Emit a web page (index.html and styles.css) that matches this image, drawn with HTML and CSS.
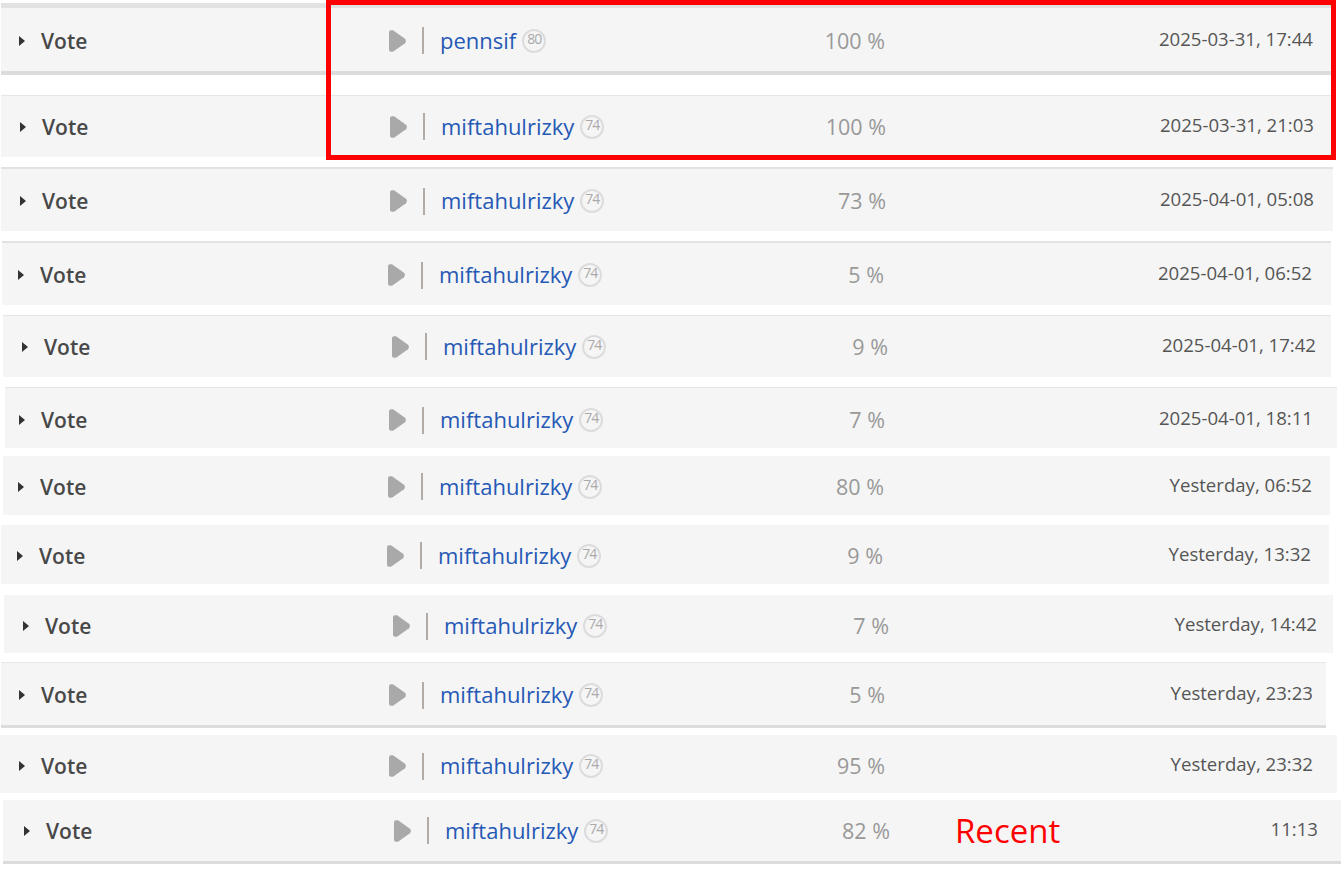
FILE: index.html
```html
<!DOCTYPE html>
<html lang="en">
<head>
<meta charset="utf-8">
<title>Vote list</title>
<link rel="stylesheet" href="styles.css">
</head>
<body>
<svg class="defs" width="0" height="0" aria-hidden="true"><defs><path id="play" d="M2 0.3H4L16 8.8Q17.8 11 16 13.2L4 21.7H2Q0 21.7 0 19.7V2.3Q0 0.3 2 0.3Z"/></defs></svg>
<div class="list">
  <div class="row r1"><span class="caret"></span><span class="vote">Vote</span><div class="who"><svg class="play" viewBox="0 0 17 22"><use href="#play"/></svg><span class="sep"></span><a class="user">pennsif</a><span class="rep">80</span></div><span class="pct">100 %</span><span class="time">2025-03-31, 17:44</span></div>
  <div class="row r2"><span class="caret"></span><span class="vote">Vote</span><div class="who"><svg class="play" viewBox="0 0 17 22"><use href="#play"/></svg><span class="sep"></span><a class="user">miftahulrizky</a><span class="rep">74</span></div><span class="pct">100 %</span><span class="time">2025-03-31, 21:03</span></div>
  <div class="row r3"><span class="caret"></span><span class="vote">Vote</span><div class="who"><svg class="play" viewBox="0 0 17 22"><use href="#play"/></svg><span class="sep"></span><a class="user">miftahulrizky</a><span class="rep">74</span></div><span class="pct">73 %</span><span class="time">2025-04-01, 05:08</span></div>
  <div class="row r4"><span class="caret"></span><span class="vote">Vote</span><div class="who"><svg class="play" viewBox="0 0 17 22"><use href="#play"/></svg><span class="sep"></span><a class="user">miftahulrizky</a><span class="rep">74</span></div><span class="pct">5 %</span><span class="time">2025-04-01, 06:52</span></div>
  <div class="row r5"><span class="caret"></span><span class="vote">Vote</span><div class="who"><svg class="play" viewBox="0 0 17 22"><use href="#play"/></svg><span class="sep"></span><a class="user">miftahulrizky</a><span class="rep">74</span></div><span class="pct">9 %</span><span class="time">2025-04-01, 17:42</span></div>
  <div class="row r6"><span class="caret"></span><span class="vote">Vote</span><div class="who"><svg class="play" viewBox="0 0 17 22"><use href="#play"/></svg><span class="sep"></span><a class="user">miftahulrizky</a><span class="rep">74</span></div><span class="pct">7 %</span><span class="time">2025-04-01, 18:11</span></div>
  <div class="row r7"><span class="caret"></span><span class="vote">Vote</span><div class="who"><svg class="play" viewBox="0 0 17 22"><use href="#play"/></svg><span class="sep"></span><a class="user">miftahulrizky</a><span class="rep">74</span></div><span class="pct">80 %</span><span class="time">Yesterday, 06:52</span></div>
  <div class="row r8"><span class="caret"></span><span class="vote">Vote</span><div class="who"><svg class="play" viewBox="0 0 17 22"><use href="#play"/></svg><span class="sep"></span><a class="user">miftahulrizky</a><span class="rep">74</span></div><span class="pct">9 %</span><span class="time">Yesterday, 13:32</span></div>
  <div class="row r9"><span class="caret"></span><span class="vote">Vote</span><div class="who"><svg class="play" viewBox="0 0 17 22"><use href="#play"/></svg><span class="sep"></span><a class="user">miftahulrizky</a><span class="rep">74</span></div><span class="pct">7 %</span><span class="time">Yesterday, 14:42</span></div>
  <div class="row r10"><span class="caret"></span><span class="vote">Vote</span><div class="who"><svg class="play" viewBox="0 0 17 22"><use href="#play"/></svg><span class="sep"></span><a class="user">miftahulrizky</a><span class="rep">74</span></div><span class="pct">5 %</span><span class="time">Yesterday, 23:23</span></div>
  <div class="row r11"><span class="caret"></span><span class="vote">Vote</span><div class="who"><svg class="play" viewBox="0 0 17 22"><use href="#play"/></svg><span class="sep"></span><a class="user">miftahulrizky</a><span class="rep">74</span></div><span class="pct">95 %</span><span class="time">Yesterday, 23:32</span></div>
  <div class="row r12"><span class="caret"></span><span class="vote">Vote</span><div class="who"><svg class="play" viewBox="0 0 17 22"><use href="#play"/></svg><span class="sep"></span><a class="user">miftahulrizky</a><span class="rep">74</span></div><span class="pct">82 %</span><span class="time">11:13</span></div>
</div>
<div class="highlight"></div>
<div class="recent">Recent</div>
</body>
</html>
```
FILE: styles.css
```css
html, body { margin: 0; padding: 0; background: #fff; }
body { width: 1343px; height: 876px; overflow: hidden; position: relative; font-family: "Open Sans", "Noto Sans", sans-serif; }
.defs { position: absolute; }
.list { display: flex; flex-direction: column; padding-top: 3px; }
.row { display: flex; align-items: center; background: #f5f5f5; box-sizing: border-box; padding-left: 18px; }
.caret { flex: none; width: 0; height: 0; border-left: 6px solid #333; border-top: 5px solid transparent; border-bottom: 5px solid transparent; }
.vote { flex: none; margin-left: 16px; width: 348px; font-size: 21px; font-weight: 600; color: #484848; }
.who { flex: none; width: 300px; display: flex; align-items: center; }
.play { flex: none; width: 17px; height: 22px; fill: #a9a9a9; }
.sep { flex: none; margin-left: 16px; width: 2px; height: 27px; background: #b3aba6; }
.user { margin-left: 16px; margin-bottom: 2px; font-size: 22px; color: #2659b5; }
.rep { flex: none; margin-left: 6px; width: 24px; height: 24px; box-sizing: border-box; border: 2px solid #dcdcdc; border-radius: 50%; font-size: 14px; line-height: 16px; letter-spacing: -1px; text-align: center; color: #aaa; }
.pct { flex: none; width: 196px; margin-bottom: 1px; text-align: right; font-size: 21.5px; color: #999; }
.time { flex: none; width: 428px; text-align: right; font-size: 18.6px; color: #555; margin-bottom: 5px; }
.highlight { position: absolute; left: 326px; top: 0; width: 1010px; height: 160px; box-sizing: border-box; border: 5px solid #f00; }
.recent { position: absolute; left: 955px; top: 809px; font-family: "Open Sans", sans-serif; font-size: 33px; line-height: 44px; color: #f00; }
.r1 { height: 72px; margin-left: 1px; width: 1333px; border-top: 5px solid #e2e2e2; border-bottom: 4px solid #dcdcdc; padding-top: 2px; }
.r2 { height: 62px; margin-top: 20px; margin-left: 1px; width: 1333px; border-top: 1px solid #e6e6e6; padding-left: 19px; }
.r3 { height: 64px; margin-top: 10px; margin-left: 1px; width: 1332px; border-top: 2px solid #e2e2e2; padding-left: 19px; padding-top: 2px; }
.r4 { height: 64px; margin-top: 10px; margin-left: 2px; width: 1329px; border-top: 2px solid #e2e2e2; padding-left: 16px; padding-top: 2px; }
.r5 { height: 62px; margin-top: 10px; margin-left: 3px; width: 1328px; border-top: 1px solid #e6e6e6; padding-left: 19px; }
.r6 { height: 61px; margin-top: 10px; margin-left: 5px; width: 1332px; border-top: 1px solid #e6e6e6; padding-left: 14px; padding-top: 4px; }
.r7 { height: 59px; margin-top: 8px; margin-left: 3px; width: 1327px; padding-left: 15px; padding-top: 2px; }
.r8 { height: 59px; margin-top: 10px; margin-left: 1px; width: 1328px; padding-left: 16px; padding-top: 2px; }
.r9 { height: 58px; margin-top: 11px; margin-left: 4px; width: 1329px; padding-left: 19px; padding-top: 4px; }
.r10 { height: 66px; margin-top: 9px; margin-left: 1px; width: 1325px; border-top: 1px solid #e6e6e6; border-bottom: 3px solid #dcdcdc; padding-left: 18px; padding-top: 2px; }
.r11 { height: 58px; margin-top: 7px; margin-left: 0; width: 1337px; padding-left: 19px; padding-top: 4px; }
.r12 { height: 64px; margin-top: 7px; margin-left: 3px; width: 1338px; border-bottom: 3px solid #dcdcdc; padding-left: 21px; }
```
